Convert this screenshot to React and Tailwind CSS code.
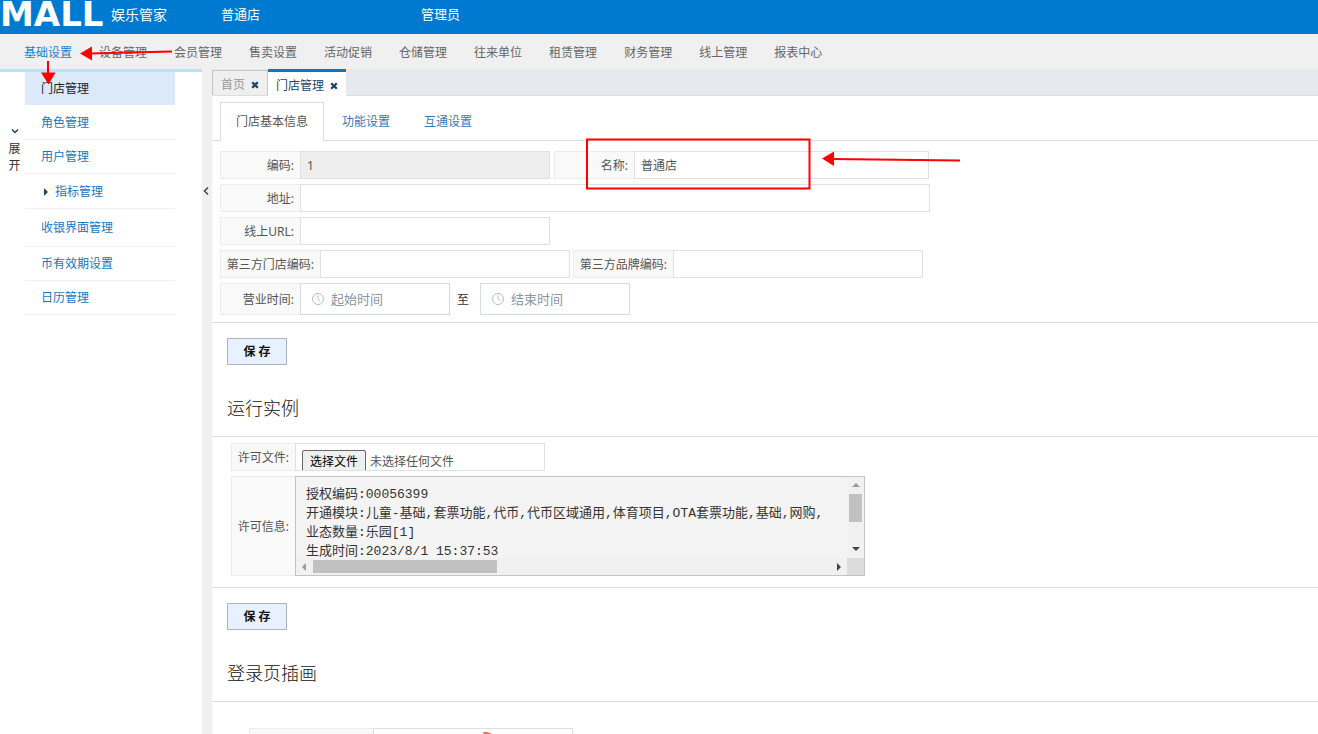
import { useState } from "react";

const NAV = ["基础设置", "设备管理", "会员管理", "售卖设置", "活动促销", "仓储管理", "往来单位", "租赁管理", "财务管理", "线上管理", "报表中心"];

const LICENSE = `授权编码:00056399
开通模块:儿童-基础,套票功能,代币,代币区域通用,体育项目,OTA套票功能,基础,网购,
业态数量:乐园[1]
生成时间:2023/8/1 15:37:53`;

const label = "flex shrink-0 items-center justify-end border border-r-0 border-[#ececec] bg-[#f9f9f9] pt-0.5 pr-1.5 text-[#555]";
const input = "min-w-0 border border-[#e0e0e0] px-1.5 text-[#555] outline-none";

function Field({ id, text, labelClass, inputClass, ...rest }) {
  return (
    <div className="flex h-7">
      <label htmlFor={id} className={`${label} ${labelClass}`}>{text}</label>
      <input id={id} type="text" className={`${input} pt-0.5 read-only:bg-[#eee] ${inputClass}`} {...rest} />
    </div>
  );
}

function Cross() {
  return (
    <svg viewBox="0 0 8 8" className="size-2" aria-hidden="true">
      <path d="M1.2 1.2 6.8 6.8M6.8 1.2 1.2 6.8" stroke="#1c4568" strokeWidth="2.3" />
    </svg>
  );
}

function TimeField({ id, placeholder, name }) {
  return (
    <div className="flex h-8 w-[150px] items-center gap-1.5 border border-[#d5dce2] bg-white px-2.5">
      <svg viewBox="0 0 14 14" className="size-3.5 shrink-0" fill="none" stroke="#b4bcc8" aria-hidden="true">
        <circle cx="7" cy="7" r="5.5" />
        <path d="M7 3.5V7.2L9 9" />
      </svg>
      <input id={id} aria-label={name} placeholder={placeholder} className="w-full min-w-0 bg-transparent pt-0.5 text-[13px] outline-none placeholder:text-[#8896a4]" />
    </div>
  );
}

function SaveButton() {
  return (
    <button type="button" className="h-[27px] w-[60px] border border-[#a9b4c6] bg-[#e8f1ff] font-bold text-[#111]">保 存</button>
  );
}

function SideLink({ children, className }) {
  return (
    <li className={`flex items-center border-b border-[#f0f0f0] pt-px pl-4 ${className}`}>
      <a href="#" className="flex items-center text-[#1a76bd]">{children}</a>
    </li>
  );
}

function Annotations() {
  return (
    <svg className="pointer-events-none absolute top-0 left-0 h-[200px] w-[970px]" viewBox="0 0 970 200" fill="none" stroke="#f00" strokeWidth="2" aria-hidden="true">
      <path d="M90 53.500 172 51.500M48 61V74M832 159 960 160.500" />
      <path d="M80 53.500 92 46.500V60.500ZM41 72.500H55.500L48.500 84.500ZM822 158.500 834 151.500V166Z" fill="#f00" stroke="none" />
      <rect x="587" y="139.500" width="222.500" height="49" />
    </svg>
  );
}

export default function App() {
  const [name, setName] = useState("普通店");
  return (
    <div className="relative flex h-screen flex-col overflow-hidden bg-white font-['Noto_Sans','Noto_Sans_CJK_SC',sans-serif] text-xs">
      <header className="flex h-[34px] shrink-0 bg-[#007ad0] text-[13px] text-white">
        <div className="flex w-[221px] items-start">
          <span className="w-[111px] font-['DejaVu_Sans',sans-serif] text-[34px] leading-7 font-bold">MALL</span>
          <span className="text-sm leading-[30px]">娱乐管家</span>
        </div>
        <div className="flex w-[200px] items-center pb-1">普通店</div>
        <div className="flex items-center pb-1">管理员</div>
      </header>

      <nav className="flex h-[35px] shrink-0 items-center gap-[27px] bg-[#f0f0f0] pt-0.5 pl-6 text-[#666]">
        {NAV.map((n, i) => (
          <a key={n} href="#" className={`whitespace-nowrap ${i === 0 ? "text-[#1a7fcb]" : ""}`}>{n}</a>
        ))}
      </nav>

      <div className="flex min-h-0 flex-1">
        <aside className="flex w-[202px] shrink-0 border-t-[3px] border-[#bfe0f7]">
          <button type="button" className="flex h-[102px] w-[25px] flex-col items-center justify-end pl-1 leading-[17px] text-[#333]">
            <svg viewBox="0 0 8 6" className="mb-1.5 h-1.5 w-2" fill="none" stroke="#1c4568" strokeWidth="1.500" aria-hidden="true"><path d="M1 1.500 4 4.500 7 1.500" /></svg>
            <span>展</span>
            <span>开</span>
          </button>
          <ul className="w-[150px]">
            <li className="flex h-[33px] items-center bg-[#dce9f9] pl-4"><a href="#" className="text-[#222]">门店管理</a></li>
            <SideLink className="h-[35px]">角色管理</SideLink>
            <SideLink className="h-[34px]">用户管理</SideLink>
            <SideLink className="h-[35px]">
              <svg viewBox="0 0 6 8" className="mr-1.5 ml-0.5 h-2 w-1.5" aria-hidden="true"><path d="M1 0 5 4 1 8Z" fill="#1c4568" /></svg>
              指标管理
            </SideLink>
            <SideLink className="h-[38px]">收银界面管理</SideLink>
            <SideLink className="h-[34px]">币有效期设置</SideLink>
            <SideLink className="h-[34px]">日历管理</SideLink>
          </ul>
        </aside>

        <button type="button" aria-label="收起菜单" className="flex w-2.5 shrink-0 items-start justify-center bg-[#f0f0f0] pt-[118px] pr-0.5">
          <svg viewBox="0 0 6 8" className="h-2 w-1.5" fill="none" stroke="#444" strokeWidth="1.500" aria-hidden="true"><path d="M5 .5 1.500 4 5 7.500" /></svg>
        </button>

        <main className="min-w-0 flex-1">
          <div className="flex h-[27px] items-end border-b border-[#d9dde2] bg-[#e6eaef]">
            <div className="flex h-[25px] w-14 items-center gap-1.5 border border-b-0 border-[#c5c5c5] bg-[#efefef] pt-1 pl-2 text-[#999]">
              首页<button type="button" aria-label="关闭首页" className="pb-px"><Cross /></button>
            </div>
            <div className="-mb-px flex h-[27px] w-[78px] items-center gap-1.5 border-t-[3px] border-[#0f75bd] bg-white pt-1 pl-2 text-[#1c4568]">
              门店管理<button type="button" aria-label="关闭门店管理" className="pb-px"><Cross /></button>
            </div>
          </div>

          <div className="mt-1.5 flex h-[39px] border-b border-[#ddd] pl-2 text-[#337ab7]" role="tablist">
            <button type="button" role="tab" aria-selected="true" className="-mb-px w-[104px] border border-b-0 border-[#ddd] bg-white text-[#555]">门店基本信息</button>
            <button type="button" role="tab" aria-selected="false" className="w-[84px] pt-0.5">功能设置</button>
            <button type="button" role="tab" aria-selected="false" className="w-20 pt-0.5">互通设置</button>
          </div>

          <form className="flex flex-col gap-[5px] border-b border-[#ddd] pt-2.5 pb-[7px] pl-2" onSubmit={(e) => e.preventDefault()}>
            <div className="flex gap-1">
              <Field id="code" text="编码:" labelClass="w-20" inputClass="w-[250px]" defaultValue="1" readOnly />
              <Field id="name" text="名称:" labelClass="w-20" inputClass="w-[295px]" value={name} onChange={(e) => setName(e.target.value)} />
            </div>
            <Field id="addr" text="地址:" labelClass="w-20" inputClass="w-[630px]" />
            <Field id="url" text="线上URL:" labelClass="w-20" inputClass="w-[250px]" />
            <div className="flex gap-[3px]">
              <Field id="shop" text="第三方门店编码:" labelClass="w-[100px]" inputClass="w-[250px]" />
              <Field id="brand" text="第三方品牌编码:" labelClass="w-[100px]" inputClass="w-[250px]" />
            </div>
            <div className="flex items-center">
              <label htmlFor="start" className={`${label} h-8 w-20`}>营业时间:</label>
              <TimeField id="start" name="起始时间" placeholder="起始时间" />
              <label htmlFor="end" className="w-[30px] pt-0.5 pr-1 text-center text-[#333]">至</label>
              <TimeField id="end" name="结束时间" placeholder="结束时间" />
            </div>
          </form>

          <section>
            <div className="flex h-[114px] flex-col items-start justify-between border-b border-[#ddd] px-[15px] pt-[15px] pb-3.5">
              <SaveButton />
              <h2 className="text-lg font-light text-[#111]">运行实例</h2>
            </div>
            <div className="flex flex-col gap-[5px] border-b border-[#ddd] pt-1.5 pb-[11px] pl-[19px]">
              <div className="flex h-7">
                <label htmlFor="file" className={`${label} w-16`}>许可文件:</label>
                <div className={`${input} w-[250px] overflow-hidden pt-1.5`}>
                  <input id="file" type="file" className="sr-only" />
                  <label htmlFor="file" className="flex items-center gap-1">
                    <span className="flex h-6 w-16 items-center justify-center rounded-xs border border-[#666] bg-[#efefef] text-black">选择文件</span>
                    未选择任何文件
                  </label>
                </div>
              </div>
              <div className="flex h-[100px]">
                <label htmlFor="license" className={`${label} w-16`}>许可信息:</label>
                <div className="grid w-[570px] grid-cols-[1fr_17px] grid-rows-[1fr_17px] border border-[#c3c3c3] bg-[#f4f4f4]">
                  <textarea id="license" readOnly wrap="off" value={LICENSE} className="resize-none overflow-hidden pt-2 pl-2.5 font-['Liberation_Mono','Noto_Sans_CJK_SC',monospace] text-[13px] leading-[19px] text-[#333] outline-none" />
                  <div className="flex flex-col items-center justify-between bg-[#f1f1f1] pt-1.5 pb-[7px]">
                    <svg viewBox="0 0 8 4" className="h-1 w-2" aria-hidden="true"><path d="M0 4 4 0 8 4Z" fill="#999" /></svg>
                    <div className="mb-[18px] h-7 w-[13px] bg-[#c1c1c1]" />
                    <svg viewBox="0 0 8 4" className="h-1 w-2" aria-hidden="true"><path d="M0 0 4 4 8 0Z" fill="#444" /></svg>
                  </div>
                  <div className="flex items-center bg-[#f1f1f1] px-1.5">
                    <svg viewBox="0 0 4 8" className="h-2 w-1" aria-hidden="true"><path d="M4 0 0 4 4 8Z" fill="#999" /></svg>
                    <div className="ml-[7px] h-[13px] w-[184px] bg-[#c1c1c1]" />
                    <svg viewBox="0 0 4 8" className="ml-auto h-2 w-1" aria-hidden="true"><path d="M0 0 4 4 0 8Z" fill="#444" /></svg>
                  </div>
                  <div className="bg-[#dcdcdc]" />
                </div>
              </div>
            </div>
          </section>

          <section>
            <div className="flex h-[114px] flex-col items-start justify-between border-b border-[#ddd] px-[15px] pt-[15px] pb-3.5">
              <SaveButton />
              <h2 className="text-lg font-light text-[#111]">登录页插画</h2>
            </div>
            <div className="flex h-[120px] pt-[26px] pl-[37px]">
              <div className={`${label} w-[124px]`} />
              <div className="w-[200px] border border-[#dedede]">
                <svg viewBox="0 0 198 20" className="h-5 w-full" aria-hidden="true"><path d="M108 3.500Q113 2 118 5L120 8H110Q112 5 108 3.500Z" fill="#e8605c" /></svg>
              </div>
            </div>
          </section>
        </main>
      </div>
      <Annotations />
    </div>
  );
}
